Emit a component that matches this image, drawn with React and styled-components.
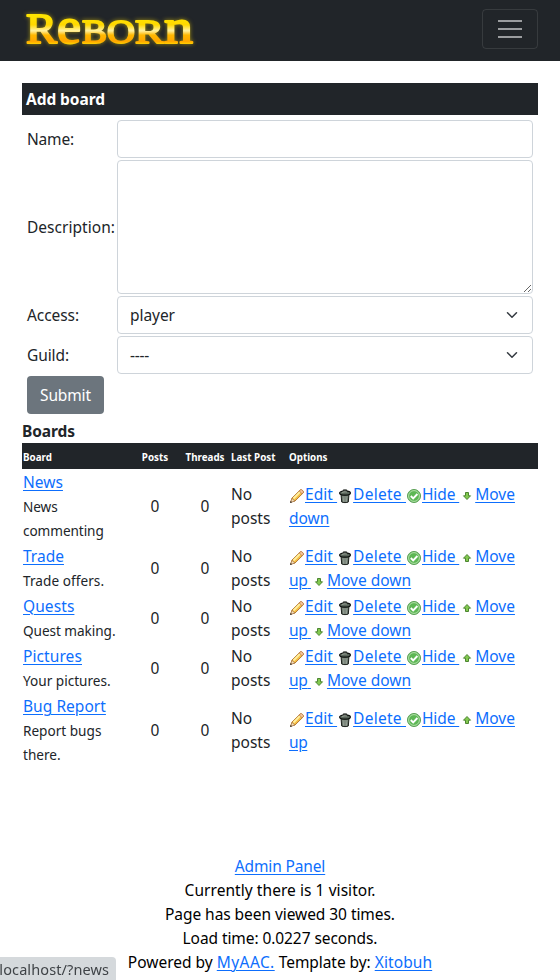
import React from 'react';
import styled, { createGlobalStyle } from 'styled-components';

const GlobalStyle = createGlobalStyle`
  *, *::before, *::after { box-sizing: border-box; }
  body {
    margin: 0;
    background: #fff;
    color: #212529;
    font-family: "Noto Sans", "Open Sans", sans-serif;
    font-size: 15.5px;
    line-height: 24px;
  }
`;

const Page = styled.div`
  height: 980px;
  display: flex;
  flex-direction: column;
  overflow: hidden;
`;

const Navbar = styled.header`
  flex: none;
  height: 61px;
  padding: 0 22px 3px;
  display: flex;
  align-items: center;
  justify-content: space-between;
  background: #212529;
`;

const LogoArt = styled.svg`
  display: block;
  margin: 2px 0 0 -2px;
  width: 180px;
  height: 50px;
  overflow: visible;
  font-family: "Liberation Serif", serif;
  font-weight: 400;
  filter: drop-shadow(0 0 2px rgba(255, 220, 0, 0.55));
`;

const Toggler = styled.button`
  width: 56px;
  height: 40px;
  padding: 0;
  display: flex;
  flex-direction: column;
  align-items: center;
  justify-content: center;
  gap: 6px;
  background: transparent;
  border: 1px solid rgba(255, 255, 255, 0.1);
  border-radius: 4px;
`;

const TogglerBar = styled.span`
  width: 24px;
  height: 2px;
  background: #9b9d9f;
`;

const Content = styled.main`
  padding: 22px 22px 0;
`;

const PanelTitle = styled.h2`
  margin: 0;
  height: 32px;
  padding: 4px;
  background: #212529;
  color: #fff;
  font-size: inherit;
  font-weight: 700;
  letter-spacing: -0.07px;
`;

const Form = styled.div`
  display: grid;
  grid-template-columns: 88px 416px;
  grid-template-rows: 38px 134px 38px 38px 38px;
  gap: 2px;
  align-items: center;
  padding: 5px 5px 0;
`;

const Track = styled.span`
  letter-spacing: ${(p) => p.$by}px;
`;

const Label = styled.label`
  white-space: nowrap;
  letter-spacing: ${(p) => p.$track}px;
`;

const control = `
  display: block;
  width: 100%;
  height: 100%;
  margin: 0;
  padding: 6px 12px;
  background: #fff;
  color: #212529;
  border: 1px solid #ced4da;
  border-radius: 4px;
  font: inherit;
  outline: none;
`;

const Input = styled.input`${control}`;
const TextArea = styled.textarea`${control}`;

const Select = styled.div`
  ${control}
  display: flex;
  align-items: center;
  justify-content: space-between;
`;

const Submit = styled.button`
  width: 77px;
  height: 38px;
  padding: 0;
  border: 0;
  border-radius: 4px;
  background: #6c757d;
  color: #fff;
  font: inherit;
  letter-spacing: -0.13px;
`;

const BoardsTitle = styled.h3`
  margin: 5px 0 0;
  font-size: inherit;
  line-height: 24px;
  letter-spacing: -0.09px;
`;

const BoardRow = styled.div`
  display: grid;
  grid-template-columns: 108px 50px 50px 58px 250px;
  align-items: center;
`;

const BoardHead = styled(BoardRow)`
  height: 26px;
  padding-top: 2px;
  background: #212529;
  color: #fff;
  font-size: 9.8px;
  font-weight: 700;
`;

const Cell = styled.div`
  padding: 1px;
  text-align: ${(p) => (p.$center ? 'center' : 'left')};
  white-space: ${(p) => (p.$nowrap ? 'nowrap' : 'normal')};
`;

const Link = styled.a`
  color: #0d6efd;
  text-decoration: underline;
  text-decoration-thickness: 1px;
  text-underline-offset: 2px;
  text-decoration-skip-ink: auto;
  letter-spacing: ${(p) => p.$track || 0}px;
`;

const Description = styled.div`
  margin: 1px 0 -1px;
  font-size: 13.6px;
  letter-spacing: ${(p) => p.$track}px;
`;

const Icon = styled.svg`
  width: 16px;
  height: 16px;
  vertical-align: middle;
`;

const Footer = styled.footer`
  margin-top: 87px;
  text-align: center;
  color: #000;
`;

const StatusBubble = styled.div`
  position: fixed;
  left: 0;
  bottom: 0;
  width: 116px;
  height: 23px;
  padding-right: 7px;
  display: flex;
  justify-content: flex-end;
  align-items: center;
  overflow: hidden;
  background: #d5d9dc;
  color: #3f4347;
  border-top-right-radius: 4px;
  font-size: 14.5px;
  letter-spacing: 0.1px;
  white-space: nowrap;
`;

const Logo = () => (
  <LogoArt viewBox="0 0 180 50" role="img">
    <defs>
      <linearGradient id="gold" gradientUnits="userSpaceOnUse" x1="0" y1="9" x2="0" y2="40">
        <stop offset="0" stopColor="#ffe600" />
        <stop offset="0.35" stopColor="#ffd800" />
        <stop offset="0.54" stopColor="#fff1a0" />
        <stop offset="0.68" stopColor="#ffb800" />
        <stop offset="0.88" stopColor="#ffa600" />
        <stop offset="1" stopColor="#ffe000" />
      </linearGradient>
    </defs>
    <g fill="url(#gold)" stroke="url(#gold)" strokeWidth="1.9" strokeLinejoin="round">
      <text y="38">
        <tspan x="6" fontSize="42" textLength="31" lengthAdjust="spacingAndGlyphs">R</tspan>
        <tspan x="37" fontSize="50" textLength="24" lengthAdjust="spacingAndGlyphs">e</tspan>
        <tspan x="62" fontSize="34" textLength="25" lengthAdjust="spacingAndGlyphs">B</tspan>
        <tspan x="87" fontSize="34" textLength="28" lengthAdjust="spacingAndGlyphs">O</tspan>
        <tspan x="115" fontSize="34" textLength="29" lengthAdjust="spacingAndGlyphs">R</tspan>
        <tspan x="144" fontSize="48" textLength="29" lengthAdjust="spacingAndGlyphs">n</tspan>
      </text>
    </g>
  </LogoArt>
);

const Chevron = () => (
  <svg width="16" height="12" viewBox="0 0 16 16">
    <path d="m2 5 6 6 6-6" fill="none" stroke="#343a40" strokeWidth="2" strokeLinecap="round" strokeLinejoin="round" />
  </svg>
);

const Pencil = () => (
  <Icon viewBox="0 0 16 16">
    <path d="M1.8 14 3 10l8.2-8c1.2-.8 3.8 1.4 3.1 2.8L6 13z" fill="#f5be45" stroke="#b0712a" strokeWidth=".9" />
    <path d="m4.5 10.5 6.8-6.8" stroke="#fff0a0" strokeWidth="1.9" />
    <path d="m10.3 2.9 1.4-1.2c1.1-.4 3 1.3 2.6 2.8L13 5.8z" fill="#f6c9a0" stroke="#b8703f" strokeWidth=".7" />
    <path d="M1.5 14.5 3 10.4 5.8 13z" fill="#f5dfbd" stroke="#9a6a3a" strokeWidth=".6" />
    <path d="m1 15 .7-2 1.4 1.3z" fill="#222" />
  </Icon>
);

const Trash = () => (
  <Icon viewBox="0 0 16 16">
    <path d="M4 6h8l-.7 8c-1.4.8-5.2.8-6.6 0z" fill="#4f5a50" stroke="#1c211c" />
    <path d="M6 8l.3 5.8M8 8v6M10 8l-.3 5.8" stroke="#b9c3b8" strokeWidth=".9" />
    <path d="M6.3 2.8V1.9h3.4v.9" fill="none" stroke="#1c211c" />
    <ellipse cx="8" cy="5" rx="5.4" ry="2.1" fill="#59645a" stroke="#0d100d" strokeWidth="1.2" />
    <path d="M4.8 4.7c1-.9 3.4-1.1 5-.7" fill="none" stroke="#a9b4a7" />
  </Icon>
);

const Check = () => (
  <Icon viewBox="0 0 16 16">
    <circle cx="8" cy="8" r="6.5" fill="#5db755" stroke="#5a9f55" />
    <circle cx="8" cy="8" r="5.4" fill="none" stroke="#b3e0aa" />
    <path d="m4.8 8 2.4 2.4 4.2-4.4" fill="none" stroke="#fff" strokeWidth="1.9" />
  </Icon>
);

const Arrow = ({ up }) => (
  <Icon viewBox="0 0 16 16">
    <path
      d={up ? 'M8 4.5 4.5 8.2h2v3.3h3V8.2h2z' : 'M8 11.5 4.5 7.8h2V4.5h3v3.3h2z'}
      fill="#83c94f"
      stroke="#4c8530"
      strokeLinejoin="round"
    />
  </Icon>
);

const boards = [
  { name: 'News', track: 0.03, text: 'News commenting', textTrack: -0.07, down: true },
  { name: 'Trade', track: 0.01, text: 'Trade offers.', textTrack: 0.05, up: true, down: true },
  { name: 'Quests', track: 0.09, text: 'Quest making.', textTrack: -0.05, up: true, down: true },
  { name: 'Pictures', track: 0.09, text: 'Your pictures.', textTrack: 0, up: true, down: true },
  { name: 'Bug Report', track: 0.04, text: 'Report bugs there.', textTrack: 0, up: true },
];

const Options = ({ up, down }) => (
  <Cell>
    <Link $track={0.06}><Pencil />Edit </Link>
    <Link $track={0.25}><Trash />Delete </Link>
    <Link $track={-0.12}><Check />Hide </Link>
    {up && <Link><Arrow up />Move <Track $by={-0.4}>up{down ? ' ' : ''}</Track></Link>}
    {down && <Link><Arrow />Move down</Link>}
  </Cell>
);

export default function App() {
  return (
    <Page>
      <GlobalStyle />
      <Navbar>
        <Logo />
        <Toggler><TogglerBar /><TogglerBar /><TogglerBar /></Toggler>
      </Navbar>
      <Content>
        <PanelTitle>Add board</PanelTitle>
        <Form>
          <Label $track={-0.18}>Name:</Label>
          <Input />
          <Label $track={0.03}>Description:</Label>
          <TextArea />
          <Label $track={-0.08}>Access:</Label>
          <Select><Track $by={-0.05}>player</Track><Chevron /></Select>
          <Label $track={-0.1}>Guild:</Label>
          <Select><Track $by={-0.25}>----</Track><Chevron /></Select>
          <Submit>Submit</Submit>
        </Form>
        <BoardsTitle>Boards</BoardsTitle>
        <BoardHead>
          <Cell>Board</Cell>
          <Cell $center>Posts</Cell>
          <Cell $center>Threads</Cell>
          <Cell $nowrap>Last Post</Cell>
          <Cell>Options</Cell>
        </BoardHead>
        {boards.map((b) => (
          <BoardRow key={b.name}>
            <Cell>
              <Link $track={b.track}>{b.name}</Link>
              <Description $track={b.textTrack}>{b.text}</Description>
            </Cell>
            <Cell $center>0</Cell>
            <Cell $center>0</Cell>
            <Cell>No posts</Cell>
            <Options up={b.up} down={b.down} />
          </BoardRow>
        ))}
      </Content>
      <Footer>
        <div><Link $track={-0.14}>Admin Panel</Link></div>
        <div><Track $by={0.06}>Currently there is 1 visitor.</Track></div>
        <div><Track $by={-0.06}>Page has been viewed 30 times.</Track></div>
        <div><Track $by={-0.08}>Load time: 0.0227 seconds.</Track></div>
        <div>
          Powered by <Link $track={0.42}>MyAAC.</Link> <Track $by={-0.06}>Template by:</Track>{' '}
          <Link $track={0.1}>Xitobuh</Link>
        </div>
      </Footer>
      <StatusBubble>localhost/?news</StatusBubble>
    </Page>
  );
}
